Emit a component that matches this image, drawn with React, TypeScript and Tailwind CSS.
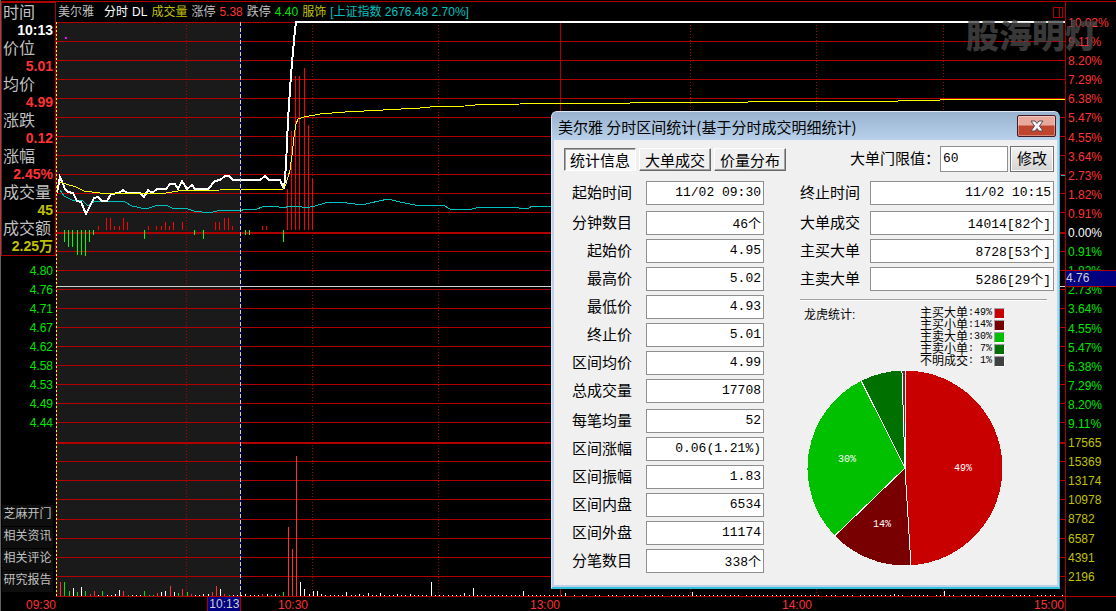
import React, { useState } from 'react';

const RED = '#b00000';

const quoteRows = [
  { label: '时间', value: '10:13', color: 'text-white' },
  { label: '价位', value: '5.01', color: 'text-[#ff3232]' },
  { label: '均价', value: '4.99', color: 'text-[#ff3232]' },
  { label: '涨跌', value: '0.12', color: 'text-[#ff3232]' },
  { label: '涨幅', value: '2.45%', color: 'text-[#ff3232]' },
  { label: '成交量', value: '45', color: 'text-[#c0c000]' },
  { label: '成交额', value: '2.25万', color: 'text-[#c0c000]' },
];

const lowPrices = ['4.80', '4.76', '4.71', '4.67', '4.62', '4.58', '4.53', '4.49', '4.44'];
const sideLinks = ['芝麻开门', '相关资讯', '相关评论', '研究报告'];

const upScale = ['10.02%', '9.11%', '8.20%', '7.29%', '6.38%', '5.47%', '4.55%', '3.64%', '2.73%', '1.82%', '0.91%'];
const downScale = ['0.91%', '1.82%', '2.73%', '3.64%', '4.55%', '5.47%', '6.38%', '7.29%', '8.20%', '9.11%'];
const volumeScale = ['17565', '15369', '13174', '10978', '8782', '6587', '4391', '2196'];

const hours = ['10:30', '13:00', '14:00', '15:00'];

// 30 linhas da grade; as linhas base (11 e 22) são mais grossas
const gridLines = Array.from({ length: 31 }, (_, i) => ({
  y: 22 + 19 * i + (i >= 11 ? 1 : 0) + (i >= 22 ? 1 : 0) + (i >= 26 ? 1 : 0) + (i === 30 ? 1 : 0),
  h: i === 11 || i === 22 ? 2 : 1,
}));

const pricePoints =
  '57,193 60,177 63,184 65,189 68,192 73,193 77,201 81,202 86,214 90,206 94,198 98,197 102,201 107,201 111,194 119,193 123,190 127,193 140,193 144,197 148,190 152,193 157,189 166,189 170,184 175,184 178,189 182,181 187,189 192,185 195,189 208,189 215,181 220,180 225,176 229,176 233,180 260,180 265,176 269,180 280,180 284,189 286,165 288,120 291,75 294,40 296,22 1065,22';
const averagePoints =
  '60,182 66,184 76,187 84,191 100,193 166,193 178,191 220,190 245,189 283,189 286,184 290,170 292,155 294,137 296,124 298,119 304,117 320,114 345,112 383,110 420,108 430,107 465,106 475,105 520,104 540,103 630,103 632,102 748,102 750,101 898,101 900,100 940,100 942,99 1065,99';
const indexPoints =
  '60,190 64,196 72,200 82,200 88,206 95,201 125,202 132,206 146,209 158,205 166,205 172,208 188,209 194,211 210,213 220,210 238,211 247,209 254,210 265,206 275,206 283,208 290,206 298,206 306,208 315,206 325,203 340,202 362,205 370,203 388,199 400,202 420,206 443,205 450,209 468,210 480,207 500,208 510,207 528,209 532,206 560,207';

// [x, altura]: positivo para cima, negativo para baixo
const strength: [number, number][] = [
  [64, -12], [68, -17], [72, -17], [77, -25], [81, -25], [85, -26], [89, -12], [93, -5],
  [98, 4], [106, 12], [110, 12], [114, 4], [119, 4], [123, 12], [127, 8], [144, -9],
  [148, 4], [156, 4], [161, 4], [165, 8], [169, 4], [173, 8], [182, 8], [194, -5], [203, -9],
  [215, 8], [219, 8], [224, 12], [228, 12], [232, 4], [245, -5], [249, -5], [262, 4], [266, 4],
  [283, -12], [287, 41], [291, 99], [295, 154], [299, 154], [304, 162], [308, 105], [312, 52],
];

// volume por minuto: r = alta, g = baixa, w = neutro
const minuteVolume =
  'r14 g14 g5 w8 g4 w9 g5 r2 r5 w1 g5 w1 w1 w2 w6 r5 g1 w1 w1 w1 g5 g1 g1 r3 w4 w5 r10 w4 g3 r7 g4 r2 w1 w1 w2 w2 r4 r10 w7 r2 g1 w1 w1 w1 w2 w1 w1 w1 r2 w2 g1 w2 g1 g4 r69 r47 r140 w14 w7 w2 w5 w5 w2'.split(' ');
const lateVolume: Record<number, number> = {
  69: 4, 72: 2, 74: 3, 77: 3, 81: 2, 84: 2, 89: 14, 97: 3, 99: 8, 111: 5, 121: 3, 151: 4, 199: 2, 211: 5,
};
const skippedMinutes = [122, 124, 127, 130, 134, 139, 145, 163, 182, 186, 190, 202, 208, 214, 220, 226, 232, 238];
const barColors: Record<string, string> = { r: '#ff3232', g: '#00e600', w: '#ffffff' };

const volumeBars = Array.from({ length: 239 }, (_, i) => {
  const minute = i + 1;
  const entry = minuteVolume[i];
  const height = entry ? Number(entry.slice(1)) : skippedMinutes.includes(minute) ? 0 : lateVolume[minute] ?? 1;
  return { x: Math.round(56 + minute * 4.21), height, color: barColors[entry ? entry[0] : 'w'] };
});

function MinuteChart() {
  return (
    <svg
      className="block min-h-0 w-full flex-1"
      viewBox="56 20 1009 577"
      preserveAspectRatio="none"
      shapeRendering="crispEdges"
      aria-label="分时走势"
    >
      <rect x="56" y="22" width="184" height="574" fill="#1a1a1a" />
      {[186, 312, 438, 690, 816, 943].map((x) => (
        <line key={x} x1={x + 0.5} x2={x + 0.5} y1="25" y2="596" stroke={RED} strokeDasharray="1 2" />
      ))}
      <rect x="560" y="22" width="1" height="574" fill={RED} />
      {gridLines.map((line) => (
        <rect key={line.y} x="56" y={line.y} width="1009" height={line.h} fill={RED} />
      ))}
      <rect x="56" y="286" width="1009" height="1" fill="#d0d0d0" />

      {strength.map(([x, h]) => (
        <rect key={x} x={x} y={h > 0 ? 230 - h : 230} width="1" height={Math.abs(h)} fill={h > 0 ? '#ff0000' : '#00ff00'} />
      ))}
      {volumeBars.map((bar) => (
        <rect key={bar.x} x={bar.x} y={596 - bar.height} width="1" height={bar.height} fill={bar.color} />
      ))}

      <polyline points={indexPoints} fill="none" stroke="#00c0c0" />
      <line x1="1061" y1="176" x2="1065" y2="175" stroke="#00c0c0" />
      <polyline points={pricePoints} fill="none" stroke="#ffffff" strokeWidth="2" />
      <polyline points={averagePoints} fill="none" stroke="#ffff00" />
      <rect x="65" y="37" width="2" height="2" fill="#ff00ff" />

      {/* Bordas da seleção */}
      <rect x="56" y="22" width="1" height="574" fill={RED} />
      <line x1="56.5" x2="56.5" y1="22" y2="596" stroke="#ffff00" strokeDasharray="2 2" />
      <rect x="240" y="22" width="1" height="574" fill="#0000c0" />
      <line x1="240.5" x2="240.5" y1="22" y2="596" stroke="#d0d0d0" strokeDasharray="4 2" />
    </svg>
  );
}

function QuotePanel() {
  return (
    <aside className="flex w-[55px] shrink-0 flex-col">
      <dl className="border border-[#b00000] pl-px pr-[2px]">
        {quoteRows.map((row) => (
          <div key={row.label}>
            <dt className="h-[18px] whitespace-nowrap text-[16px] leading-[20px] text-[#c0c0c0]">{row.label}</dt>
            <dd className={`h-[18px] whitespace-nowrap text-right text-[14px] font-bold leading-[18px] ${row.color}`}>
              {row.value}
            </dd>
          </div>
        ))}
      </dl>
      <ul className="mt-[6px] pr-[3px] text-right text-[12px] leading-[19px] text-[#00e600]">
        {lowPrices.map((price) => (
          <li key={price}>{price}</li>
        ))}
      </ul>
      <nav className="mt-auto flex flex-col gap-px pb-[5px] pl-px pr-[3px]">
        {sideLinks.map((link) => (
          <button key={link} type="button" className="h-[21px] whitespace-nowrap bg-[#0e0e0e] pb-[3px] text-[12px] leading-[18px] text-[#c0c0c0]">
            {link}
          </button>
        ))}
      </nav>
      <span className="h-[14px] text-right text-[12px] leading-[16px] text-[#ff3232]">09:30</span>
    </aside>
  );
}

function ScaleColumn() {
  return (
    <aside className="relative flex w-[51px] shrink-0 flex-col border-l border-[#b00000] text-[12px] leading-[19px]">
      <ul className="flex min-h-0 flex-1 flex-col pb-[9px] pl-[2px] pt-[12px]">
        {upScale.map((v) => (
          <li key={v} className="min-h-0 flex-1 text-[#ff3232]">{v}</li>
        ))}
        <li className="min-h-0 flex-1 text-white">0.00%</li>
        {downScale.map((v) => (
          <li key={v} className="min-h-0 flex-1 text-[#00e600]">{v}</li>
        ))}
        {volumeScale.map((v) => (
          <li key={v} className="min-h-0 flex-1 text-[#c0c000]">{v}</li>
        ))}
      </ul>
      <div className="h-[15px] border-t border-[#b00000]" />
      <span className="absolute inset-x-0 top-[44%] h-[17px] border-y border-[#b00000] bg-[#000080] leading-[15px] text-[#d0d0d0]">
        4.76
      </span>
    </aside>
  );
}

interface Field {
  label: string;
  value: string;
}

const leftGroups: Field[][] = [
  [{ label: '起始时间', value: '11/02 09:30' }],
  [
    { label: '分钟数目', value: '46个' },
    { label: '起始价', value: '4.95' },
    { label: '最高价', value: '5.02' },
    { label: '最低价', value: '4.93' },
    { label: '终止价', value: '5.01' },
    { label: '区间均价', value: '4.99' },
    { label: '总成交量', value: '17708' },
  ],
  [
    { label: '每笔均量', value: '52' },
    { label: '区间涨幅', value: '0.06(1.21%)' },
    { label: '区间振幅', value: '1.83' },
    { label: '区间内盘', value: '6534' },
    { label: '区间外盘', value: '11174' },
    { label: '分笔数目', value: '338个' },
  ],
];

const rightGroups: Field[][] = [
  [{ label: '终止时间', value: '11/02 10:15' }],
  [
    { label: '大单成交', value: '14014[82个]' },
    { label: '主买大单', value: '8728[53个]' },
    { label: '主卖大单', value: '5286[29个]' },
  ],
];

function FieldGroups({ groups, gap }: { groups: Field[][]; gap: string }) {
  return (
    <div className="flex flex-col gap-[6px]">
      {groups.map((group) => (
        <div key={group[0].label} className="flex flex-col gap-1">
          {group.map((field) => (
            <label key={field.label} className={`flex items-center ${gap}`}>
              <span className="w-[60px] shrink-0 text-right text-[15px] leading-[22px]">{field.label}</span>
              <input
                readOnly
                value={field.value}
                className="h-6 w-0 min-w-0 flex-1 border border-[#8e8f8f] bg-white px-[2px] pb-px text-right font-['Liberation_Mono','Noto_Sans_CJK_SC',monospace] text-[13px]"
              />
            </label>
          ))}
        </div>
      ))}
    </div>
  );
}

const legend = [
  { label: '主买大单', value: '49%', color: 'bg-[#c80000]' },
  { label: '主买小单', value: '14%', color: 'bg-[#780000]' },
  { label: '主卖大单', value: '30%', color: 'bg-[#00c000]' },
  { label: '主卖小单', value: '7%', color: 'bg-[#007000]' },
  { label: '不明成交', value: '1%', color: 'bg-[#404040]' },
];

const slices = [
  { from: 0, to: 176.5, color: '#c80000' },
  { from: 176.5, to: 226, color: '#780000' },
  { from: 226, to: 333.3, color: '#00c000' },
  { from: 333.3, to: 358.4, color: '#007000' },
  { from: 358.4, to: 359.4, color: '#404040' },
  { from: 359.4, to: 360, color: '#c80000' },
];

function slicePath(from: number, to: number) {
  const point = (deg: number) => {
    const rad = (deg * Math.PI) / 180;
    return `${98 + 97.5 * Math.sin(rad)} ${98 - 97.5 * Math.cos(rad)}`;
  };
  return `M98 98 L${point(from)} A97.5 97.5 0 0 1 ${point(to)} Z`;
}

function PieChart() {
  return (
    <svg className="ml-[7px] block h-[196px] w-[196px]" viewBox="0 0 196 196" aria-label="龙虎统计">
      <g shapeRendering="crispEdges">
        {slices.map((s) => (
          <path key={s.from} d={slicePath(s.from, s.to)} fill={s.color} />
        ))}
        {[0, 176.5, 226, 333.3, 358.2].map((deg) => {
          const rad = (deg * Math.PI) / 180;
          return (
            <line key={deg} x1="98" y1="98" x2={98 + 97.5 * Math.sin(rad)} y2={98 - 97.5 * Math.cos(rad)} stroke="#ffffff" />
          );
        })}
      </g>
      <g fill="#ffffff" textAnchor="middle" className="font-['Liberation_Mono',monospace] text-[10px]">
        <text x="156" y="101">49%</text>
        <text x="40" y="92">30%</text>
        <text x="75" y="157">14%</text>
      </g>
    </svg>
  );
}

const tabs = ['统计信息', '大单成交', '价量分布'];

function StatsDialog() {
  const [active, setActive] = useState(0);
  const [limit, setLimit] = useState('60');

  return (
    <section
      role="dialog"
      aria-label="分时区间统计"
      className="absolute right-[56px] top-[111px] w-[509px] rounded-t-[6px] border border-b-2 border-[#dfe9f5] border-b-[#35c0dc] border-r-[#35c0dc] bg-[#bcd2ea] px-[2px] pb-[2px] text-black"
    >
      <header className="-mx-[2px] flex h-[28px] items-start justify-between rounded-t-[5px] bg-linear-to-b from-[#98b2cf] to-[#b9d1ea] pl-[6px] pr-[3px]">
        <h2 className="whitespace-nowrap text-[15px] leading-[30px] font-['Noto_Sans_CJK_SC',sans-serif]">
          美尔雅 分时区间统计(基于分时成交明细统计)
        </h2>
        <button
          type="button"
          aria-label="关闭"
          className="mt-[3px] flex h-[22px] w-[39px] items-center justify-center rounded-[2px] border border-[#431a22] bg-linear-to-b from-[#e8a89c] from-45% to-[#c0452f] to-50% shadow-[inset_0_0_0_1px_rgba(255,255,255,0.35)]"
        >
          <svg viewBox="0 0 14 12" className="h-3 w-3.5">
            <path
              d="M1 1h4l2 2.500L9 1h4L9.500 6 13 11H9L7 8.500 5 11H1l3.500-5z"
              fill="#f8f8f8"
              stroke="#5a4a55"
              strokeWidth="1"
            />
          </svg>
        </button>
      </header>

      <div className="bg-[#f0f0f0] pb-[12px] pl-[10px] pr-[3px] pt-[6px]">
        <div className="flex items-center justify-between">
          <div role="tablist" className="flex gap-[3px]">
            {tabs.map((tab, i) => (
              <button
                key={tab}
                type="button"
                role="tab"
                aria-selected={active === i}
                onClick={() => setActive(i)}
                className={`h-[23px] w-[72px] whitespace-nowrap border pt-px text-[15px] leading-[22px] ${
                  active === i
                    ? 'border-[#707070] border-b-white border-r-white bg-[#f8f8f8] shadow-[inset_1px_1px_0_#a8a8a8]'
                    : 'border-white border-b-[#696969] border-r-[#696969] bg-[#f0f0f0] shadow-[inset_-1px_-1px_0_#a0a0a0]'
                }`}
              >
                {tab}
              </button>
            ))}
          </div>
          <div className="flex items-center gap-[2px]">
            <label className="flex items-center text-[15px]">
              <span className="whitespace-nowrap pt-px">大单门限值：</span>
              <input
                value={limit}
                onChange={(e) => setLimit(e.target.value)}
                className="h-[26px] w-[68px] border border-[#8e8f8f] bg-white px-[2px] pb-px font-['Liberation_Mono',monospace] text-[13px]"
              />
            </label>
            <button
              type="button"
              className="h-[26px] w-[44px] border border-[#707070] bg-linear-to-b from-[#f2f2f2] to-[#d4d4d4] text-[15px] leading-[22px] shadow-[inset_0_0_0_1px_#fbfbfb]"
            >
              修改
            </button>
          </div>
        </div>

        <div className="mt-[9px] flex gap-[36px] pl-[8px]">
          <div className="w-[192px] shrink-0">
            <FieldGroups groups={leftGroups} gap="gap-[14px]" />
          </div>
          <div className="min-w-0 flex-1">
            <FieldGroups groups={rightGroups} gap="gap-[10px]" />
            <hr className="mr-[7px] mt-[8px] border-b border-t border-b-white border-t-[#a0a0a0]" />
            <div className="flex items-start justify-between pl-[4px] pr-[49px] pt-[6px] text-[12px] leading-[12px]">
              <h3 className="pt-[2px]">龙虎统计:</h3>
              <ul>
                {legend.map((item) => (
                  <li key={item.label} className="flex h-3 items-center">
                    <span>{item.label}</span>
                    <span className="whitespace-pre font-['Liberation_Mono',monospace] text-[10px]">
                      :{item.value.padStart(3)}
                    </span>
                    <i className={`ml-[2px] h-[11px] w-[11px] border border-[#a0a0a0] border-b-white border-r-white ${item.color}`} />
                  </li>
                ))}
              </ul>
            </div>
            <div className="pt-[3px]">
              <PieChart />
            </div>
          </div>
        </div>
      </div>
    </section>
  );
}

export default function App() {
  return (
    <main className="relative flex h-screen overflow-hidden border-l border-[#606060] bg-black pt-px font-['Liberation_Sans','Noto_Sans_CJK_SC',sans-serif]">
      <div className="flex min-w-0 flex-1 border-t border-[#b00000]">
        <QuotePanel />

        <div className="relative flex min-w-0 flex-1 flex-col">
          <header className="flex h-[18px] shrink-0 items-center gap-1 whitespace-nowrap pl-[2px] pt-[2px] text-[12px] leading-[18px] text-[#c0c0c0]">
            <h1 className="mr-[6px]">美尔雅</h1>
            <span className="text-white">分时</span>
            <span className="text-white">DL</span>
            <span className="text-[#c0c000]">成交量</span>
            <span>涨停</span>
            <span className="text-[#ff3232]">5.38</span>
            <span>跌停</span>
            <span className="text-[#00e600]">4.40</span>
            <span className="text-[#c0c000]">服饰</span>
            <span className="text-[#00c0c0]">[上证指数 2676.48 2.70%]</span>
            <svg viewBox="0 0 10 11" className="ml-auto mr-[2px] h-[11px] w-[10px]" shapeRendering="crispEdges">
              <path d="M.5.5h9v10h-9zM6.500 0v11" fill="none" stroke={RED} />
            </svg>
          </header>

          <MinuteChart />

          <footer className="grid h-[14px] shrink-0 grid-cols-4 pr-px text-right text-[12px] leading-[16px] text-[#ff3232]">
            {hours.map((hour) => (
              <span key={hour}>{hour}</span>
            ))}
          </footer>
          <span className="absolute bottom-0 left-[15%] h-[14px] w-[34px] border-x border-[#b00000] bg-[#000080] text-center text-[12px] leading-[15px] text-[#d0d0d0]">
            10:13
          </span>
        </div>

        <ScaleColumn />
      </div>

      {/* Marca d'água */}
      <div className="pointer-events-none absolute right-[18px] top-[14px] whitespace-nowrap text-[33px] font-black leading-[46px] text-[#484848]/80">
        股海明灯
      </div>

      <StatsDialog />
    </main>
  );
}
